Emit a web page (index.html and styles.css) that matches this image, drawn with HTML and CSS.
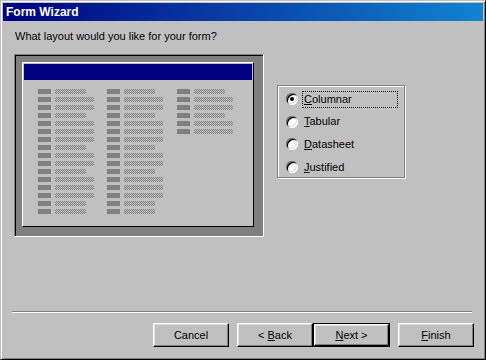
FILE: index.html
```html
<!DOCTYPE html>
<html>
<head>
<meta charset="utf-8">
<link rel="stylesheet" href="styles.css">
</head>
<body>
<div class="window">
  <div class="titlebar"><span class="title">Form Wizard</span></div>
  <div class="body">
    <p class="prompt">What layout would you like for your form?</p>
    <div class="mid">
      <div class="preview">
        <div class="panel">
          <div class="panel-head"></div>
          <div class="fields">
            <div class="col">
              <div class="row"><span class="lbl"></span><span class="txt s"></span></div>
              <div class="row"><span class="lbl"></span><span class="txt l"></span></div>
              <div class="row"><span class="lbl"></span><span class="txt l"></span></div>
              <div class="row"><span class="lbl"></span><span class="txt s"></span></div>
              <div class="row"><span class="lbl"></span><span class="txt l"></span></div>
              <div class="row"><span class="lbl"></span><span class="txt l"></span></div>
              <div class="row"><span class="lbl"></span><span class="txt l"></span></div>
              <div class="row"><span class="lbl"></span><span class="txt s"></span></div>
              <div class="row"><span class="lbl"></span><span class="txt l"></span></div>
              <div class="row"><span class="lbl"></span><span class="txt l"></span></div>
              <div class="row"><span class="lbl"></span><span class="txt s"></span></div>
              <div class="row"><span class="lbl"></span><span class="txt l"></span></div>
              <div class="row"><span class="lbl"></span><span class="txt l"></span></div>
              <div class="row"><span class="lbl"></span><span class="txt l"></span></div>
              <div class="row"><span class="lbl"></span><span class="txt s"></span></div>
              <div class="row"><span class="lbl"></span><span class="txt s"></span></div>
            </div>
            <div class="col col2">
              <div class="row"><span class="lbl"></span><span class="txt s"></span></div>
              <div class="row"><span class="lbl"></span><span class="txt l"></span></div>
              <div class="row"><span class="lbl"></span><span class="txt l"></span></div>
              <div class="row"><span class="lbl"></span><span class="txt s"></span></div>
              <div class="row"><span class="lbl"></span><span class="txt l"></span></div>
              <div class="row"><span class="lbl"></span><span class="txt l"></span></div>
              <div class="row"><span class="lbl"></span><span class="txt l"></span></div>
              <div class="row"><span class="lbl"></span><span class="txt s"></span></div>
              <div class="row"><span class="lbl"></span><span class="txt l"></span></div>
              <div class="row"><span class="lbl"></span><span class="txt l"></span></div>
              <div class="row"><span class="lbl"></span><span class="txt s"></span></div>
              <div class="row"><span class="lbl"></span><span class="txt l"></span></div>
              <div class="row"><span class="lbl"></span><span class="txt l"></span></div>
              <div class="row"><span class="lbl"></span><span class="txt l"></span></div>
              <div class="row"><span class="lbl"></span><span class="txt s"></span></div>
              <div class="row"><span class="lbl"></span><span class="txt s"></span></div>
            </div>
            <div class="col col3">
              <div class="row"><span class="lbl"></span><span class="txt s"></span></div>
              <div class="row"><span class="lbl"></span><span class="txt l"></span></div>
              <div class="row"><span class="lbl"></span><span class="txt l"></span></div>
              <div class="row"><span class="lbl"></span><span class="txt s"></span></div>
              <div class="row"><span class="lbl"></span><span class="txt l"></span></div>
              <div class="row"><span class="lbl"></span><span class="txt l"></span></div>
            </div>
          </div>
        </div>
      </div>
      <div class="group">
        <div class="opt"><span class="radio checked"></span><span class="olabel focus"><u>C</u>olumnar</span></div>
        <div class="opt"><span class="radio"></span><span class="olabel"><u>T</u>abular</span></div>
        <div class="opt"><span class="radio"></span><span class="olabel"><u>D</u>atasheet</span></div>
        <div class="opt"><span class="radio"></span><span class="olabel"><u>J</u>ustified</span></div>
      </div>
    </div>
    <div class="sep"></div>
    <div class="buttons">
      <div class="btn cancel"><span>Cancel</span></div>
      <div class="btn back"><span>&lt; <u>B</u>ack</span></div>
      <div class="btn next default"><span class="inner"><span><u>N</u>ext &gt;</span></span></div>
      <div class="btn finish"><span><u>F</u>inish</span></div>
    </div>
  </div>
</div>
</body>
</html>
```

FILE: styles.css
```css
* { box-sizing: border-box; }
html, body { margin: 0; padding: 0; background: #c0c0c0; }
body {
  font-family: "Liberation Sans", Arial, sans-serif;
  font-size: 11px;
  color: #000;
}
.window {
  width: 486px;
  height: 360px;
  background: #c0c0c0;
  border: 1px solid;
  border-color: #c0c0c0 #000 #000 #c0c0c0;
  box-shadow: inset 1px 1px 0 #fff, inset -1px -1px 0 #808080;
  padding: 2px;
  display: flex;
  flex-direction: column;
}
.titlebar {
  height: 18px;
  background: linear-gradient(to right, #000080, #1084d0);
  display: flex;
  align-items: center;
  padding-left: 3px;
}
.title {
  color: #fff;
  font-weight: bold;
  font-size: 12px;
  line-height: 14px;
}
.body {
  padding-left: 11px;
  display: flex;
  flex-direction: column;
}
.prompt {
  margin: 9px 0 0 1px;
  line-height: 13px;
  height: 13px;
}
.mid {
  display: flex;
  align-items: flex-start;
  margin-top: 11px;
}
.preview {
  width: 250px;
  height: 183px;
  background: #808080;
  border: 1px solid;
  border-color: #808080 #fff #fff #808080;
  box-shadow: inset 1px 1px 0 #000;
  padding: 7px 8px 8px 7px;
}
.panel {
  width: 232px;
  height: 165px;
  background: #c0c0c0;
  border: 1px solid;
  border-color: #fff #000 #000 #fff;
  padding: 1px;
}
.panel-head {
  height: 16px;
  background: #000080;
}
.fields {
  display: flex;
  padding: 9px 0 0 14px;
}
.col {
  width: 69px;
  display: flex;
  flex-direction: column;
  gap: 3px;
}
.col2 { width: 70px; }
.row {
  display: flex;
  height: 5px;
  gap: 4px;
}
.lbl {
  width: 13px;
  height: 5px;
  background: #808080;
}
.txt {
  height: 5px;
  background: repeating-conic-gradient(#808080 0 25%, #c0c0c0 0 50%) 0 0 / 2px 2px;
}
.txt.s { width: 31px; }
.txt.l { width: 39px; }

.group {
  margin: 31px 0 0 13px;
  width: 128px;
  height: 93px;
  border: 1px solid #808080;
  box-shadow: inset 1px 1px 0 #fff, 1px 1px 0 #fff;
  padding: 5px 0 0 8px;
  display: flex;
  flex-direction: column;
}
.opt {
  display: flex;
  align-items: center;
  height: 16px;
  margin-bottom: 6.7px;
}
.radio {
  width: 12px;
  height: 12px;
  border-radius: 50%;
  background: #fff;
  box-shadow: inset 1px 1px 0 #808080, inset -1px -1px 0 #fff, inset 2px 2px 0 #000, inset -2px -2px 0 #dfdfdf;
  display: flex;
  align-items: center;
  justify-content: center;
  flex: none;
}
.radio.checked::after {
  content: "";
  width: 4px;
  height: 4px;
  border-radius: 50%;
  background: #000;
}
.olabel {
  margin-left: 4px;
  width: 96px;
  height: 17px;
  line-height: 15px;
  padding-left: 1px;
  border: 1px dotted transparent;
}
.olabel.focus { border-color: #000; }
u { text-decoration: underline; text-underline-offset: 1px; }

.sep {
  margin: 74px 0 0 -2px;
  width: 460px;
  height: 2px;
  border-top: 1px solid #808080;
  border-bottom: 1px solid #fff;
}
.buttons {
  display: flex;
  margin: 10px 0 0 139px;
}
.btn {
  width: 76px;
  height: 24px;
  display: flex;
  align-items: center;
  justify-content: center;
  border: 1px solid;
  border-color: #fff #000 #000 #fff;
  box-shadow: inset -1px -1px 0 #808080, inset 1px 1px 0 #dfdfdf;
  line-height: 13px;
}
.back { margin-left: 8px; }
.next {
  width: 77px;
  border: 1px solid #000;
  box-shadow: none;
  padding: 0;
}
.next .inner {
  width: 100%;
  height: 100%;
  display: flex;
  align-items: center;
  justify-content: center;
  border: 1px solid;
  border-color: #fff #000 #000 #fff;
  box-shadow: inset -1px -1px 0 #808080, inset 1px 1px 0 #dfdfdf;
}
.finish { margin-left: 8px; }
```
